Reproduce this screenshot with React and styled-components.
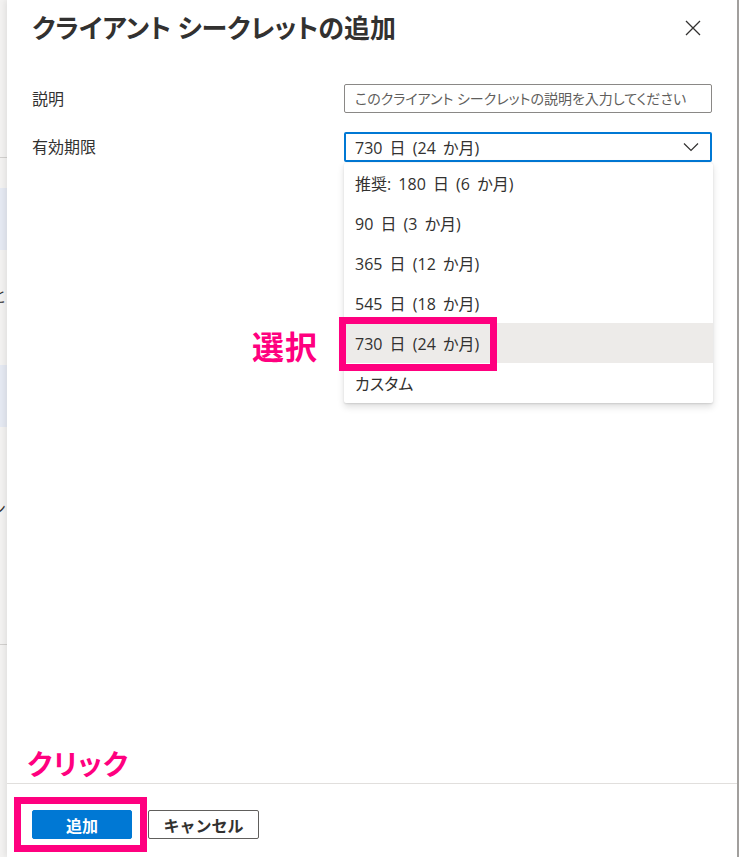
import React from 'react';
import styled, { createGlobalStyle } from 'styled-components';

const GlobalStyle = createGlobalStyle`
  html, body {
    margin: 0;
    padding: 0;
    background: #ffffff;
  }

  body {
    font-family: 'Open Sans', 'Noto Sans CJK JP', sans-serif;
    font-feature-settings: 'palt';
    color: #323130;
  }

  *, *::before, *::after {
    box-sizing: border-box;
  }
`;

const Page = styled.div`
  display: flex;
  height: 100vh;
  overflow: hidden;
`;

const BackStrip = styled.div`
  flex: none;
  width: 7px;
  display: flex;
  flex-direction: column;
  background: #f3f2f1;
  overflow: hidden;
`;

const StripBlock = styled.div`
  flex: none;
  height: ${(p) => p.h}px;
  background: ${(p) => p.bg || '#f3f2f1'};
  border-bottom: ${(p) => (p.line ? '1px solid #d2d0ce' : 'none')};
  display: flex;
  align-items: ${(p) => p.align || 'center'};
`;

const StripText = styled.span`
  margin-left: -9px;
  font-size: 16px;
  line-height: 16px;
  white-space: nowrap;
  color: #323130;
`;

const Panel = styled.section`
  position: relative;
  flex: 1;
  display: flex;
  flex-direction: column;
  background: #ffffff;
  border-right: 2px solid #a19f9d;
  box-shadow: -2px 0 6px rgba(0, 0, 0, 0.08);
`;

const Header = styled.header`
  display: flex;
  align-items: center;
  justify-content: space-between;
  padding: 10px 36px 0 25px;
`;

const Title = styled.h1`
  margin: 0;
  font-size: 26px;
  line-height: 36px;
  font-weight: 700;
  color: #323130;
`;

const CloseButton = styled.button`
  display: flex;
  padding: 0;
  border: none;
  background: none;
  color: #323130;
  cursor: pointer;
`;

const Body = styled.div`
  flex: 1;
  padding: 38px 25px 0 25px;
`;

const FormGrid = styled.div`
  display: grid;
  grid-template-columns: 312px 368px;
  row-gap: 19px;
  align-items: center;
`;

const Label = styled.label`
  font-size: 16px;
  line-height: 22px;
  color: #323130;
`;

const TextInput = styled.input`
  width: 100%;
  height: 29px;
  padding: 0 10px;
  border: 1px solid #8a8886;
  border-radius: 2px;
  font: inherit;
  font-size: 14px;
  color: #323130;
  outline: none;

  &::placeholder {
    color: #605e5c;
  }
`;

const SelectWrap = styled.div`
  position: relative;
`;

const SelectBox = styled.div`
  height: 30px;
  display: flex;
  align-items: center;
  justify-content: space-between;
  padding: 0 11px 0 9px;
  border: 2px solid #0078d4;
  border-radius: 2px;
  font-size: 16px;
  word-spacing: 3px;
  color: #323130;
`;

const Menu = styled.ul`
  position: absolute;
  top: calc(100% + 1px);
  left: 0;
  width: 369px;
  margin: 0;
  padding: 0;
  list-style: none;
  background: #ffffff;
  border-radius: 2px;
  box-shadow: 0 3.2px 7.2px rgba(0, 0, 0, 0.13), 0 0.6px 1.8px rgba(0, 0, 0, 0.11);
  z-index: 2;
`;

const MenuItem = styled.li`
  height: 40px;
  display: flex;
  align-items: center;
  padding-left: 11px;
  font-size: 16px;
  word-spacing: 3px;
  color: #323130;
  background: ${(p) => (p.selected ? '#edebe9' : 'transparent')};
`;

const Footer = styled.footer`
  flex: none;
  height: 74px;
  display: flex;
  align-items: flex-start;
  gap: 16px;
  padding: 26px 25px 0 25px;
  border-top: 1px solid #e1dfdd;
`;

const Button = styled.button`
  width: ${(p) => p.w}px;
  height: 29px;
  border-radius: 2px;
  font-family: inherit;
  font-size: 16px;
  font-weight: 700;
  cursor: pointer;
  border: 1px solid ${(p) => (p.primary ? '#0078d4' : '#605e5c')};
  background: ${(p) => (p.primary ? '#0078d4' : '#ffffff')};
  color: ${(p) => (p.primary ? '#ffffff' : '#323130')};
`;

const Note = styled.span`
  position: absolute;
  left: ${(p) => p.x}px;
  top: ${(p) => p.y}px;
  font-size: ${(p) => p.size}px;
  line-height: 1;
  font-weight: 700;
  color: #ff007f;
  letter-spacing: 1px;
  z-index: 3;
`;

const Highlight = styled.div`
  position: absolute;
  left: ${(p) => p.x}px;
  top: ${(p) => p.y}px;
  width: ${(p) => p.w}px;
  height: ${(p) => p.h}px;
  border: 7px solid #ff007f;
  z-index: 3;
`;

const options = [
  '推奨: 180 日 (6 か月)',
  '90 日 (3 か月)',
  '365 日 (12 か月)',
  '545 日 (18 か月)',
  '730 日 (24 か月)',
  'カスタム',
];

const CloseIcon = () => (
  <svg width="16" height="16" viewBox="0 0 16 16">
    <path d="M1 1 L15 15 M15 1 L1 15" stroke="currentColor" strokeWidth="1.3" fill="none" />
  </svg>
);

const Chevron = () => (
  <svg width="16" height="10" viewBox="0 0 16 10">
    <path d="M1 1.5 L8 8.5 L15 1.5" stroke="#323130" strokeWidth="1.2" fill="none" />
  </svg>
);

export default function App() {
  const selected = '730 日 (24 か月)';

  return (
    <>
      <GlobalStyle />
      <Page>
        <BackStrip>
          <StripBlock h={158} line />
          <StripBlock h={30} />
          <StripBlock h={62} bg="#e5e9f2" />
          <StripBlock h={38} />
          <StripBlock h={77} align="flex-start">
            <StripText>と</StripText>
          </StripBlock>
          <StripBlock h={62} bg="#e5e9f2" />
          <StripBlock h={90} align="flex-end">
            <StripText>ン</StripText>
          </StripBlock>
          <StripBlock h={128} line />
        </BackStrip>

        <Panel>
          <Header>
            <Title>クライアント シークレットの追加</Title>
            <CloseButton aria-label="閉じる">
              <CloseIcon />
            </CloseButton>
          </Header>

          <Body>
            <FormGrid>
              <Label>説明</Label>
              <TextInput placeholder="このクライアント シークレットの説明を入力してください" />
              <Label>有効期限</Label>
              <SelectWrap>
                <SelectBox>
                  <span>{selected}</span>
                  <Chevron />
                </SelectBox>
                <Menu>
                  {options.map((o) => (
                    <MenuItem key={o} selected={o === selected}>
                      {o}
                    </MenuItem>
                  ))}
                </Menu>
              </SelectWrap>
            </FormGrid>
          </Body>

          <Footer>
            <Button primary w={100}>追加</Button>
            <Button w={111}>キャンセル</Button>
          </Footer>

          <Note x={245} y={331} size={32}>選択</Note>
          <Highlight x={332} y={317} w={158} h={54} />
          <Note x={20} y={750} size={28}>クリック</Note>
          <Highlight x={7} y={797} w={133} h={55} />
        </Panel>
      </Page>
    </>
  );
}
